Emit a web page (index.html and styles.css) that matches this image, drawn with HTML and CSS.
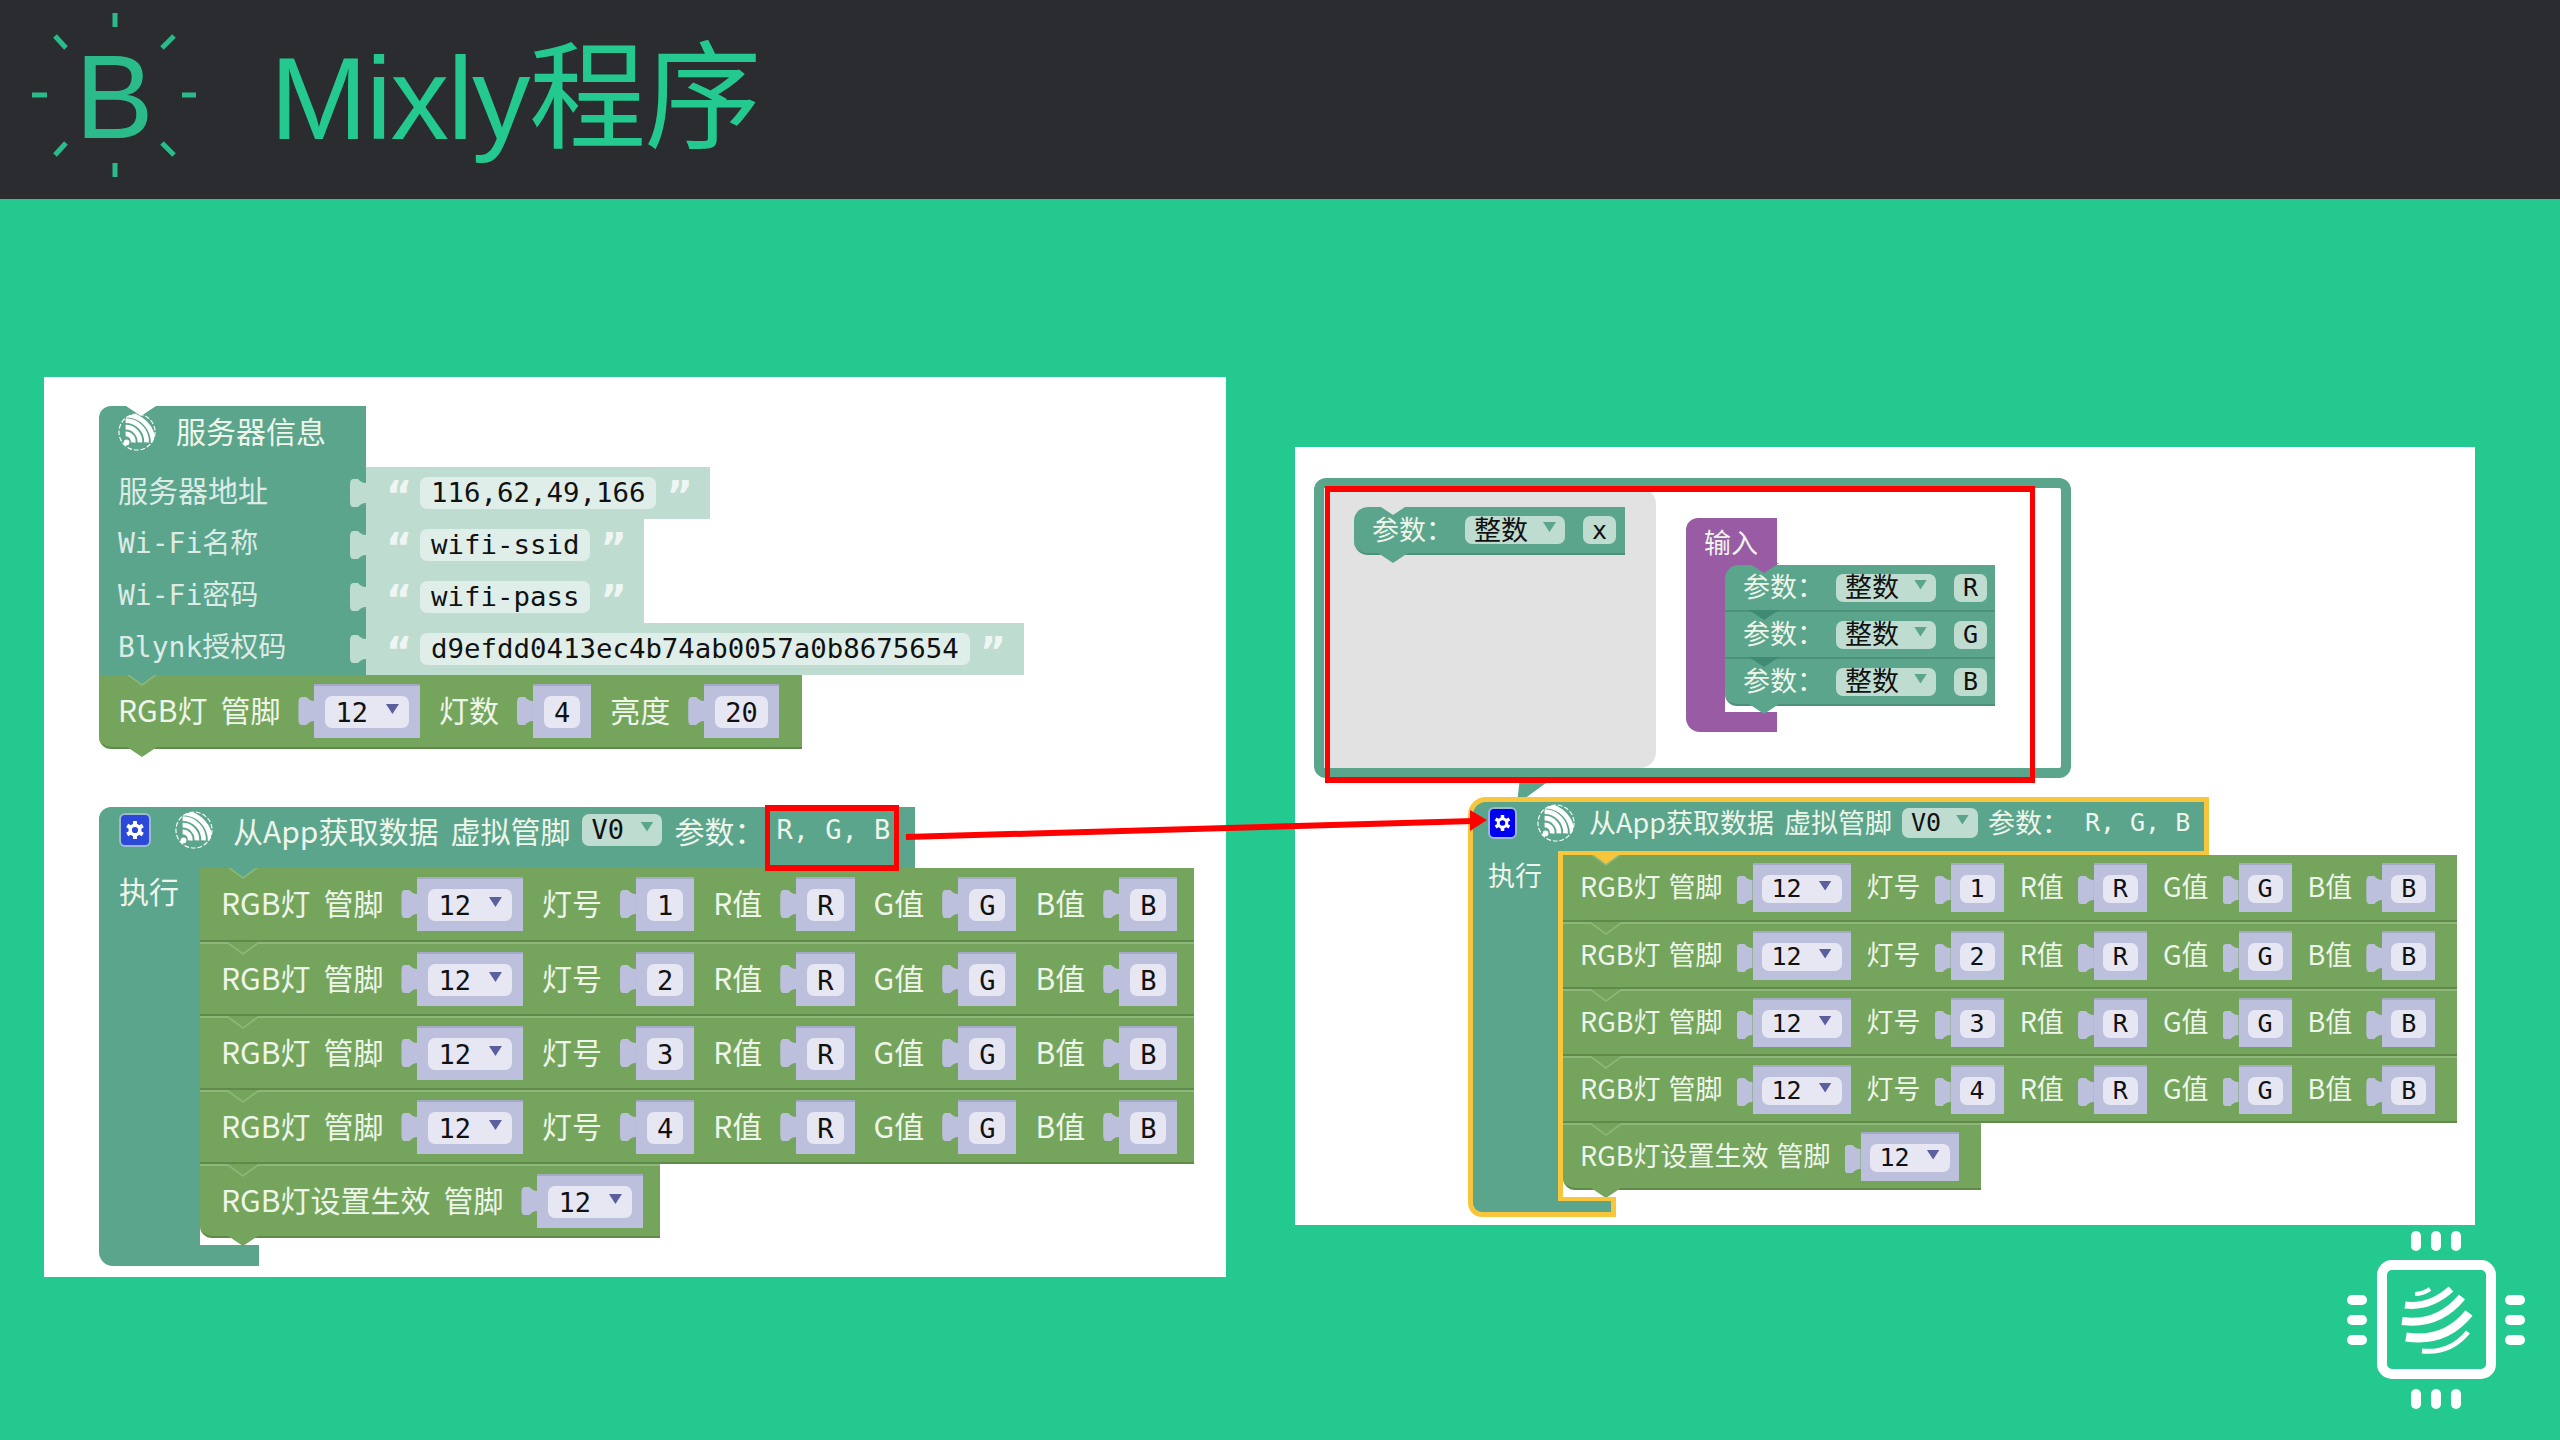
FILE: index.html
```html
<!DOCTYPE html>
<html lang="zh-CN">
<head>
  <meta charset="UTF-8" />
  <title>Mixly程序</title>
  <link rel="stylesheet" href="styles.css">
</head>
<body>
<svg class="defs" width="0" height="0">
  <symbol id="espressif" viewBox="0 0 40 40">
    <clipPath id="round"><circle cx="20" cy="20" r="19"/></clipPath>
    <circle cx="20" cy="20" r="19" fill="none" stroke="#fff" stroke-width="1.2" stroke-dasharray="5 2"/>
    <g clip-path="url(#round)" fill="none" stroke="#fff" stroke-width="5">
      <path d="M8 22A8 8 0 0 1 16 31"/>
      <path d="M8 15A15 15 0 0 1 23 31"/>
      <path d="M8 8A22 22 0 0 1 30 31"/>
      <path d="M9 2A29 29 0 0 1 37 32"/>
    </g>
    <circle cx="9" cy="31" r="3" fill="#fff"/>
  </symbol>
  <symbol id="gear" viewBox="0 0 20 20">
    <g stroke="#fff" stroke-width="3">
      <path d="M10 3V17M4 6.5L16 13.5M16 6.5L4 13.5"/>
    </g>
    <circle cx="10" cy="10" r="5" fill="#fff"/>
    <circle cx="10" cy="10" r="2.4" fill="currentColor"/>
  </symbol>
</svg>

<div class="slide">
  <header class="top-bar">
    <div class="logo">
      <svg class="logo-rays" viewBox="0 0 230 199">
        <path d="M115 13V27M115 163V177M32 95H47M182 95H196M55 36L66 48M174 36L162 48M66 143L55 155M162 143L174 155"/>
      </svg>
      <span class="logo-b">B</span>
    </div>
    <h1 class="title">Mixly程序</h1>
  </header>

  <main class="content">
    <section class="panel panel-left blocks-lg">
      <div class="server">
        <div class="server-head notched">
          <svg class="esp"><use href="#espressif"/></svg>
          <span class="txt">服务器信息</span>
        </div>
        <div class="server-row">
          <span class="server-label cn">服务器地址</span>
          <span class="strip"><i class="quote">“</i><span class="str">116,62,49,166</span><i class="quote">”</i></span>
        </div>
        <div class="server-row">
          <span class="server-label">Wi-Fi名称</span>
          <span class="strip"><i class="quote">“</i><span class="str">wifi-ssid</span><i class="quote">”</i></span>
        </div>
        <div class="server-row">
          <span class="server-label">Wi-Fi密码</span>
          <span class="strip"><i class="quote">“</i><span class="str">wifi-pass</span><i class="quote">”</i></span>
        </div>
        <div class="server-row">
          <span class="server-label">Blynk授权码</span>
          <span class="strip"><i class="quote">“</i><span class="str">d9efdd0413ec4b74ab0057a0b8675654</span><i class="quote">”</i></span>
        </div>
      </div>
      <div class="blk-row first solo tailed rounded-bottom">
        <span class="txt">RGB灯</span><span class="txt">管脚</span>
        <span class="sock"><span class="pill">12<i class="arrow"></i></span></span>
        <span class="txt">灯数</span>
        <span class="sock"><span class="pill">4</span></span>
        <span class="txt">亮度</span>
        <span class="sock"><span class="pill">20</span></span>
        <i class="tail"></i>
      </div>

      <div class="fn-block fn-left">
        <div class="fn-head">
          <svg class="gear"><use href="#gear"/></svg>
          <svg class="esp"><use href="#espressif"/></svg>
          <span class="txt">从App获取数据</span><span class="txt">虚拟管脚</span>
          <span class="drop">V0<i class="arrow"></i></span>
          <span class="txt">参数：</span>
          <span class="args">R, G, B</span>
        </div>
        <div class="fn-body">
          <div class="fn-side txt">执行</div>
          <div class="fn-stack">
            <div class="blk-row first">
              <span class="txt">RGB灯</span><span class="txt">管脚</span>
              <span class="sock"><span class="pill">12<i class="arrow"></i></span></span>
              <span class="txt">灯号</span><span class="sock"><span class="pill">1</span></span>
              <span class="txt">R值</span><span class="sock"><span class="pill">R</span></span>
              <span class="txt">G值</span><span class="sock"><span class="pill">G</span></span>
              <span class="txt">B值</span><span class="sock"><span class="pill">B</span></span>
            </div>
            <div class="blk-row">
              <span class="txt">RGB灯</span><span class="txt">管脚</span>
              <span class="sock"><span class="pill">12<i class="arrow"></i></span></span>
              <span class="txt">灯号</span><span class="sock"><span class="pill">2</span></span>
              <span class="txt">R值</span><span class="sock"><span class="pill">R</span></span>
              <span class="txt">G值</span><span class="sock"><span class="pill">G</span></span>
              <span class="txt">B值</span><span class="sock"><span class="pill">B</span></span>
            </div>
            <div class="blk-row">
              <span class="txt">RGB灯</span><span class="txt">管脚</span>
              <span class="sock"><span class="pill">12<i class="arrow"></i></span></span>
              <span class="txt">灯号</span><span class="sock"><span class="pill">3</span></span>
              <span class="txt">R值</span><span class="sock"><span class="pill">R</span></span>
              <span class="txt">G值</span><span class="sock"><span class="pill">G</span></span>
              <span class="txt">B值</span><span class="sock"><span class="pill">B</span></span>
            </div>
            <div class="blk-row">
              <span class="txt">RGB灯</span><span class="txt">管脚</span>
              <span class="sock"><span class="pill">12<i class="arrow"></i></span></span>
              <span class="txt">灯号</span><span class="sock"><span class="pill">4</span></span>
              <span class="txt">R值</span><span class="sock"><span class="pill">R</span></span>
              <span class="txt">G值</span><span class="sock"><span class="pill">G</span></span>
              <span class="txt">B值</span><span class="sock"><span class="pill">B</span></span>
            </div>
            <div class="blk-row tailed rounded-bottom">
              <span class="txt">RGB灯设置生效</span><span class="txt">管脚</span>
              <span class="sock"><span class="pill">12<i class="arrow"></i></span></span>
              <i class="tail"></i>
            </div>
          </div>
        </div>
        <div class="fn-foot"></div>
      </div>
    </section>

    <section class="panel panel-right blocks-sm">
      <div class="bubble">
        <div class="flyout">
          <div class="param param-lone">
            <span class="txt">参数：</span>
            <span class="drop">整数<i class="arrow"></i></span>
            <span class="name">x</span>
            <i class="tail"></i>
          </div>
        </div>
        <div class="mutator">
          <div class="mut-head txt">输入</div>
          <div class="mut-body">
            <div class="mut-side"></div>
            <div class="mut-stack">
              <div class="param mut-first">
                <span class="txt">参数：</span>
                <span class="drop">整数<i class="arrow"></i></span>
                <span class="name">R</span>
              </div>
              <div class="param">
                <span class="txt">参数：</span>
                <span class="drop">整数<i class="arrow"></i></span>
                <span class="name">G</span>
              </div>
              <div class="param mut-last">
                <span class="txt">参数：</span>
                <span class="drop">整数<i class="arrow"></i></span>
                <span class="name">B</span>
                <i class="tail"></i>
              </div>
            </div>
          </div>
          <div class="mut-foot"></div>
        </div>
      </div>
      <div class="bubble-tail"></div>

      <div class="fn-block fn-right">
        <div class="fn-head">
          <svg class="gear"><use href="#gear"/></svg>
          <svg class="esp"><use href="#espressif"/></svg>
          <span class="txt">从App获取数据</span><span class="txt">虚拟管脚</span>
          <span class="drop">V0<i class="arrow"></i></span>
          <span class="txt">参数：</span>
          <span class="args">R, G, B</span>
        </div>
        <div class="fn-body">
          <div class="fn-side txt">执行</div>
          <div class="fn-stack">
            <div class="blk-row first">
              <span class="txt">RGB灯</span><span class="txt">管脚</span>
              <span class="sock"><span class="pill">12<i class="arrow"></i></span></span>
              <span class="txt">灯号</span><span class="sock"><span class="pill">1</span></span>
              <span class="txt">R值</span><span class="sock"><span class="pill">R</span></span>
              <span class="txt">G值</span><span class="sock"><span class="pill">G</span></span>
              <span class="txt">B值</span><span class="sock"><span class="pill">B</span></span>
            </div>
            <div class="blk-row">
              <span class="txt">RGB灯</span><span class="txt">管脚</span>
              <span class="sock"><span class="pill">12<i class="arrow"></i></span></span>
              <span class="txt">灯号</span><span class="sock"><span class="pill">2</span></span>
              <span class="txt">R值</span><span class="sock"><span class="pill">R</span></span>
              <span class="txt">G值</span><span class="sock"><span class="pill">G</span></span>
              <span class="txt">B值</span><span class="sock"><span class="pill">B</span></span>
            </div>
            <div class="blk-row">
              <span class="txt">RGB灯</span><span class="txt">管脚</span>
              <span class="sock"><span class="pill">12<i class="arrow"></i></span></span>
              <span class="txt">灯号</span><span class="sock"><span class="pill">3</span></span>
              <span class="txt">R值</span><span class="sock"><span class="pill">R</span></span>
              <span class="txt">G值</span><span class="sock"><span class="pill">G</span></span>
              <span class="txt">B值</span><span class="sock"><span class="pill">B</span></span>
            </div>
            <div class="blk-row">
              <span class="txt">RGB灯</span><span class="txt">管脚</span>
              <span class="sock"><span class="pill">12<i class="arrow"></i></span></span>
              <span class="txt">灯号</span><span class="sock"><span class="pill">4</span></span>
              <span class="txt">R值</span><span class="sock"><span class="pill">R</span></span>
              <span class="txt">G值</span><span class="sock"><span class="pill">G</span></span>
              <span class="txt">B值</span><span class="sock"><span class="pill">B</span></span>
            </div>
            <div class="blk-row tailed rounded-bottom">
              <span class="txt">RGB灯设置生效</span><span class="txt">管脚</span>
              <span class="sock"><span class="pill">12<i class="arrow"></i></span></span>
              <i class="tail"></i>
            </div>
          </div>
        </div>
        <div class="fn-foot"></div>
      </div>
    </section>
  </main>

  <!-- red annotations on top of the two screenshots -->
  <div class="mark mark-args"></div>
  <div class="mark mark-bubble"></div>
  <svg class="link-arrow" viewBox="0 0 2560 1440">
    <path class="link-line" d="M906 837L1474 821"/>
    <path class="link-head" d="M1487 820L1470 810V831Z"/>
  </svg>

  <svg class="chip" viewBox="0 0 240 230">
    <g fill="#fff">
      <rect x="91" y="21" width="10" height="20" rx="5"/>
      <rect x="111" y="21" width="10" height="20" rx="5"/>
      <rect x="131" y="21" width="10" height="20" rx="5"/>
      <rect x="91" y="179" width="10" height="20" rx="5"/>
      <rect x="111" y="179" width="10" height="20" rx="5"/>
      <rect x="131" y="179" width="10" height="20" rx="5"/>
      <rect x="27" y="85" width="20" height="10" rx="5"/>
      <rect x="27" y="105" width="20" height="10" rx="5"/>
      <rect x="27" y="125" width="20" height="10" rx="5"/>
      <rect x="185" y="85" width="20" height="10" rx="5"/>
      <rect x="185" y="105" width="20" height="10" rx="5"/>
      <rect x="185" y="125" width="20" height="10" rx="5"/>
    </g>
    <rect x="62" y="55" width="109" height="109" rx="10" fill="none" stroke="#fff" stroke-width="10"/>
    <g fill="none" stroke="#fff">
      <path stroke-width="4" d="M95 84Q103 84 110 79"/>
      <path stroke-width="7" d="M85 95Q110 98 131 79"/>
      <path stroke-width="8" d="M82 111Q118 116 142 87"/>
      <path stroke-width="9" d="M86 127Q125 133 149 103"/>
      <path stroke-width="5" d="M102 141Q130 144 148 122"/>
    </g>
  </svg>
</div>
</body>
</html>
```

FILE: styles.css
```css
* {
  box-sizing: border-box;
}

body {
  margin: 0;
  background: #23c98f;
  font-family: "Liberation Sans Narrow", "Noto Sans CJK SC", sans-serif;
}

.defs {
  position: absolute;
}

.slide {
  position: relative;
  width: 2560px;
  height: 1440px;
  overflow: hidden;
}

/* header */
.top-bar {
  display: flex;
  align-items: center;
  height: 199px;
  background: #2a2c30;
}

.logo {
  position: relative;
  width: 270px;
  height: 199px;
  flex: none;
}

.logo-rays {
  position: absolute;
  left: 0;
  top: 0;
  width: 230px;
  height: 199px;
  fill: none;
  stroke: #2bbb8b;
  stroke-width: 5;
}

.logo-b {
  position: absolute;
  left: 75px;
  top: 27px;
  font: 118px/1.2 "Liberation Sans", sans-serif;
  color: #2bbb8b;
}

.title {
  margin: 0;
  font: 400 117px/1.2 "Liberation Sans", "Noto Sans CJK SC", sans-serif;
  letter-spacing: -1.5px;
  color: #23c98f;
}

/* white screenshots */
.content {
  display: flex;
  align-items: flex-start;
  gap: 69px;
  padding: 178px 0 0 44px;
}

.panel {
  flex: none;
  background: #fff;
}

.panel-left {
  width: 1182px;
  height: 900px;
  padding: 29px 0 0 55px;
}

.panel-right {
  width: 1180px;
  height: 778px;
  margin-top: 70px;
  padding: 31px 0 0 19px;
}

/* sizes of the two block scripts */
.blocks-lg {
  --row-h: 74px;
  --gap: 19px;
  --pad: 21px;
  --pad-r: 17px;
  --fs: 30px;
  --mono: 27px;
  --sock-h: 54px;
  --sock-pad: 11px;
  --pill-h: 32px;
  --pill-gap: 18px;
  --tab: 15px;
  --first-gap: -6px;
  --txt-shift: -4px;
}

.blocks-sm {
  --row-h: 67px;
  --gap: 16px;
  --pad: 17px;
  --pad-r: 22px;
  --fs: 27px;
  --mono: 25px;
  --sock-h: 49px;
  --sock-pad: 9px;
  --pill-h: 28px;
  --pill-gap: 17px;
  --tab: 14px;
  --first-gap: -8px;
  --txt-shift: -2px;
}

.txt {
  font-size: var(--fs);
  line-height: 1.2;
  color: #eef5ea;
  white-space: nowrap;
}

.esp {
  flex: none;
  width: 38px;
  height: 40px;
}

/* server info block */
.server {
  display: flex;
  flex-direction: column;
}

.server-head {
  position: relative;
  display: flex;
  align-items: center;
  gap: 20px;
  width: 267px;
  height: 61px;
  padding: 0 0 10px 19px;
  background: #5ba58c;
  border-radius: 12px 0 0 0;
}

.server-head .txt {
  margin-top: -4px;
}

.notched::before {
  content: "";
  position: absolute;
  left: 27px;
  top: 0;
  width: 30px;
  height: 10px;
  background: #fff;
  clip-path: polygon(0 0, 100% 0, 50% 100%);
}

.server-row {
  display: flex;
  align-items: stretch;
  height: 52px;
}

.server-label {
  width: 267px;
  padding-left: 19px;
  background: #5ba58c;
  font: 28px/50px "DejaVu Sans Mono", "Noto Sans CJK SC", monospace;
  color: #dcebe5;
  white-space: nowrap;
}

.server-label.cn {
  font-size: 30px;
}

.strip {
  position: relative;
  display: flex;
  align-items: center;
  gap: 10px;
  padding: 0 20px;
  background: #bfdcd0;
}

.strip::before {
  content: "";
  position: absolute;
  left: -16px;
  top: 10px;
  width: 16px;
  height: 32px;
  background: #bfdcd0;
  clip-path: path("M16 6C12 6 10 4 8 2L3 2C1 2 0 4 0 8L0 24C0 28 1 30 3 30L8 30C10 28 12 26 16 26Z");
}

.quote {
  align-self: flex-start;
  width: 24px;
  height: 46px;
  margin-top: 6px;
  font: 700 40px/46px "DejaVu Sans", sans-serif;
  color: #eef6f3;
}

.str {
  height: 32px;
  padding: 0 11px;
  border-radius: 7px;
  background: #dfeee8;
  font: 27.4px/32px "DejaVu Sans Mono", monospace;
  color: #111;
}

/* statement blocks */
.blk-row {
  --row-bg: #75a55c;
  --row-dark: #5f8a4a;
  --v-fill: var(--row-bg);
  position: relative;
  display: flex;
  align-items: center;
  gap: var(--gap);
  width: fit-content;
  height: var(--row-h);
  padding: 0 var(--pad-r) 0 var(--pad);
  background: var(--row-bg);
  border-top: 2px solid #8db879;
  border-bottom: 2px solid var(--row-dark);
}

.blk-row > .txt {
  margin-top: var(--txt-shift);
}

.blk-row > .txt:first-child {
  margin-right: var(--first-gap);
}

.blk-row.solo {
  padding: 0 23px 0 19px;
}

.blk-row.first {
  --v-fill: #5ba58c;
  border-top: 0;
}

.fn-right .blk-row.first {
  --v-fill: var(--yellow);
}

.blk-row::before,
.blk-row::after {
  content: "";
  position: absolute;
  left: 28px;
  top: 0;
  width: 30px;
  height: 11px;
  clip-path: polygon(0 0, 100% 0, 50% 100%);
}

.blk-row::before {
  background: #8db879;
}

.blk-row::after {
  top: -2px;
  background: var(--v-fill);
}

.rounded-bottom {
  border-radius: 0 0 0 12px;
}

.tail {
  position: absolute;
  left: 28px;
  top: 100%;
  width: 30px;
  height: 10px;
  background: inherit;
  clip-path: polygon(0 0, 100% 0, 50% 100%);
}

.sock {
  position: relative;
  display: flex;
  align-items: center;
  justify-content: center;
  flex: none;
  height: var(--sock-h);
  margin-left: var(--tab);
  padding: 0 var(--sock-pad);
  background: #bcc0dc;
  border-top: 2px solid #a4a9c8;
}

.sock::before {
  content: "";
  position: absolute;
  left: -16px;
  top: 9px;
  width: 16px;
  height: 32px;
  background: #bcc0dc;
  clip-path: path("M16 6C12 6 10 4 8 2L3 2C1 2 0 4 0 8L0 24C0 28 1 30 3 30L8 30C10 28 12 26 16 26Z");
}

.pill {
  display: flex;
  align-items: center;
  gap: var(--pill-gap);
  height: var(--pill-h);
  padding: 0 10px;
  border-radius: 7px;
  background: #e6e7f3;
  font: var(--mono)/1 "DejaVu Sans Mono", monospace;
  color: #111;
}

.arrow {
  flex: none;
  width: 13px;
  height: 10px;
  margin-top: -6px;
  background: #5a5f9e;
  clip-path: polygon(0 0, 100% 0, 50% 100%);
}

/* function block */
.fn-block {
  --yellow: transparent;
}

.fn-left {
  margin-top: 58px;
  --side-w: 101px;
  --foot-w: 160px;
  --foot-h: 21px;
  --rim: 0px;
}

.fn-right {
  margin: 19px 0 0 154px;
  --side-w: 90px;
  --foot-w: 148px;
  --foot-h: 20px;
  --rim: 5px;
  --yellow: #f8c63c;
}

.fn-head {
  position: relative;
  display: flex;
  align-items: center;
  gap: 12px;
  width: fit-content;
  height: 61px;
  padding: 0 25px 16px 20px;
  background: #5ba58c;
  border-radius: 12px 0 0 0;
}

.fn-head .esp {
  margin-left: 12px;
}

.fn-head .esp + .txt {
  margin-left: 8px;
}

.fn-right .fn-head {
  height: 58px;
  gap: 10px;
  padding: 0 14px 12px 15px;
  border: var(--rim) solid var(--yellow);
  border-bottom: 0;
  border-radius: 18px 0 0 0;
}

.fn-right .fn-head .esp {
  margin-left: 10px;
}

.fn-right .fn-head .esp + .txt {
  margin-left: 4px;
}

.fn-right .fn-head .args {
  margin-left: 6px;
}

.fn-right .fn-head::after {
  content: "";
  position: absolute;
  left: calc(var(--side-w) - var(--rim));
  right: 0;
  bottom: 0;
  height: 4px;
  background: var(--yellow);
}

.gear {
  flex: none;
  width: 32px;
  height: 34px;
  padding: 1px;
  border-radius: 6px;
  background: #2b48d8;
  border: 2px solid #9bb9cf;
  color: #2b48d8;
}

.fn-right .gear {
  width: 29px;
  height: 32px;
  background: #0000f0;
  color: #0000f0;
}

.args {
  font: var(--mono)/1 "DejaVu Sans Mono", monospace;
  color: #eef5ea;
  white-space: pre;
}

.drop {
  display: flex;
  align-items: center;
  justify-content: space-between;
  flex: none;
  width: 80px;
  height: 32px;
  padding: 0 9px;
  border-radius: 7px;
  background: #bfdcd0;
  font: var(--mono)/1 "DejaVu Sans Mono", "Noto Sans CJK SC", monospace;
  color: #111;
  white-space: nowrap;
}

.fn-right .drop {
  width: 76px;
  height: 30px;
}

.drop .arrow {
  background: #5ba58c;
}

.fn-body {
  display: flex;
}

.fn-side {
  width: var(--side-w);
  flex: none;
  padding: 4px 0 0 20px;
  background: #5ba58c;
  border-left: var(--rim) solid var(--yellow);
}

.fn-right .fn-side {
  padding-left: 15px;
}

.fn-stack {
  padding-bottom: 7px;
  border-left: var(--rim) solid var(--yellow);
}

.fn-foot {
  position: relative;
  width: var(--foot-w);
  height: var(--foot-h);
  background: #5ba58c;
  border: var(--rim) solid var(--yellow);
  border-top: 0;
  border-radius: 0 0 0 14px;
}

.fn-right .fn-foot::after {
  content: "";
  position: absolute;
  left: calc(var(--side-w) - var(--rim));
  right: 0;
  top: 0;
  height: 4px;
  background: var(--yellow);
}

/* mutator bubble */
.bubble {
  display: flex;
  gap: 30px;
  width: 757px;
  height: 300px;
  border: 10px solid #5ba58c;
  border-radius: 12px;
  background: #fff;
}

.bubble-tail {
  position: absolute;
  left: 1517px;
  top: 778px;
  width: 36px;
  height: 26px;
  background: #5ba58c;
  clip-path: polygon(8% 0, 100% 0, 0 100%);
}

.flyout {
  width: 332px;
  padding: 19px 0 0 30px;
  background: #e2e2e2;
  border-radius: 0 16px 16px 0;
}

.param {
  --v-top: #3f8a72;
  position: relative;
  display: flex;
  align-items: center;
  height: 47px;
  padding: 0 12px 0 18px;
  gap: 12px;
  background: #5ba58c;
  border-bottom: 2px solid #4e917a;
}

.param > .txt {
  margin-top: -2px;
}

.param::before {
  content: "";
  position: absolute;
  left: 24px;
  top: -2px;
  width: 30px;
  height: 10px;
  background: var(--v-top);
  clip-path: polygon(0 0, 100% 0, 50% 100%);
}

.param-lone {
  --v-top: #e2e2e2;
  width: 271px;
  height: 48px;
  border-radius: 14px 0 0 14px;
}

.mut-first {
  --v-top: #9a5ba5;
  border-radius: 14px 0 0 0;
}

.mut-last {
  border-radius: 0 0 0 12px;
}

.param .drop {
  width: 100px;
  height: 28px;
  padding: 0 9px;
  font-size: 27px;
}

.param .tail {
  left: 24px;
}

.name {
  display: flex;
  align-items: center;
  justify-content: center;
  flex: none;
  width: 33px;
  height: 28px;
  margin-left: 6px;
  border-radius: 7px;
  background: #bfdcd0;
  font: var(--mono)/1 "DejaVu Sans Mono", monospace;
  color: #111;
}

.mutator {
  width: 309px;
  margin-top: 30px;
}

.mut-head {
  width: 91px;
  height: 47px;
  padding: 8px 0 0 18px;
  background: #9a5ba5;
  border-radius: 12px 0 0 0;
  line-height: 1.2;
}

.mut-body {
  display: flex;
  background: linear-gradient(#9a5ba5, #9a5ba5) left top / 91px 20px no-repeat;
}

.mut-side {
  width: 39px;
  flex: none;
  background: #9a5ba5;
}

.mut-stack {
  padding-bottom: 6px;
}

.mut-stack .param {
  width: 270px;
}

.mut-foot {
  width: 91px;
  height: 20px;
  background: #9a5ba5;
  border-radius: 0 0 0 14px;
}

/* red annotations */
.mark {
  position: absolute;
  border: 6px solid #f00;
  border-left-width: 5px;
  border-right-width: 5px;
}

.mark-args {
  left: 765px;
  top: 805px;
  width: 134px;
  height: 66px;
}

.mark-bubble {
  left: 1325px;
  top: 486px;
  width: 710px;
  height: 297px;
}

.link-arrow {
  position: absolute;
  left: 0;
  top: 0;
  width: 2560px;
  height: 1440px;
  pointer-events: none;
}

.link-line {
  fill: none;
  stroke: #f00;
  stroke-width: 6;
}

.link-head {
  fill: #f00;
}

.chip {
  position: absolute;
  right: 0;
  bottom: 0;
  width: 240px;
  height: 230px;
}
```
